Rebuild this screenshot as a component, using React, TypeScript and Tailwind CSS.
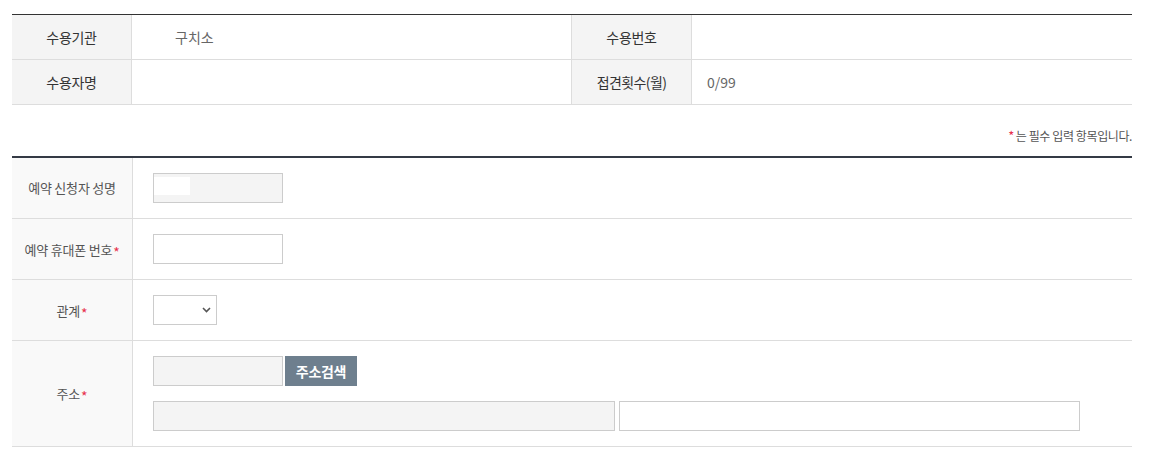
import React from "react";

const font = { fontFamily: '"Noto Sans CJK KR", "Noto Sans", sans-serif' };

function Star() {
  return <span className="text-[#e8314d] text-[14px] ml-[1px] relative top-[3px]">*</span>;
}

function Label({ children, req }: { children: React.ReactNode; req?: boolean }) {
  return (
    <div className="w-[121px] shrink-0 bg-[#f9f9f9] border-r border-[#dddddd] flex items-center justify-center text-[13px] text-[#555555] leading-[18px] tracking-[-0.2px]">
      <span>
        {children}
        {req && <Star />}
      </span>
    </div>
  );
}

export default function App() {
  return (
    <div className="w-[1152px] h-[457px] bg-white" style={font}>
      <div className="pt-[14px] px-[12px] w-[1144px]">
        {/* Table 1 */}
        <div className="border-t border-[#333333]">
          <div className="flex h-[45px] border-b border-[#dddddd]">
            <div className="w-[120px] shrink-0 bg-[#f4f4f4] border-r border-[#dddddd] flex items-center justify-center text-[14px] text-[#333333] tracking-[-0.3px]">수용기관</div>
            <div className="w-[440px] shrink-0 border-r border-[#dddddd] flex items-center pl-[43px] text-[14px] text-[#666666]">구치소</div>
            <div className="w-[120px] shrink-0 bg-[#f4f4f4] border-r border-[#dddddd] flex items-center justify-center text-[14px] text-[#333333] tracking-[-0.3px]">수용번호</div>
            <div className="flex-1" />
          </div>
          <div className="flex h-[45px] border-b border-[#dddddd]">
            <div className="w-[120px] shrink-0 bg-[#f4f4f4] border-r border-[#dddddd] flex items-center justify-center text-[14px] text-[#333333] tracking-[-0.3px]">수용자명</div>
            <div className="w-[440px] shrink-0 border-r border-[#dddddd]" />
            <div className="w-[120px] shrink-0 bg-[#f4f4f4] border-r border-[#dddddd] flex items-center justify-center text-[14px] text-[#333333] tracking-[-0.6px]">접견횟수(월)</div>
            <div className="flex-1 flex items-center pl-[15px] text-[14px] text-[#666666]">0/99</div>
          </div>
        </div>

        {/* Notice */}
        <div className="h-[51px] flex items-end justify-end pb-[12px] text-[12px] leading-[16px] text-[#555555] tracking-[-0.4px]">
          <span className="text-[#e8314d] mr-[2px] text-[13px]">*</span>
          <span>는 필수 입력 항목입니다.</span>
        </div>

        {/* Table 2 */}
        <div className="border-t-2 border-[#343a45]">
          <div className="flex border-b border-[#dddddd]">
            <Label>예약 신청자 성명</Label>
            <div className="flex-1 pl-[20px] py-[15px]">
              <div className="relative w-[130px] h-[30px] bg-[#f4f4f4] border border-[#cccccc]">
                <span className="absolute left-0 top-[3px] w-[36px] h-[18px] bg-white" />
              </div>
            </div>
          </div>
          <div className="flex border-b border-[#dddddd]">
            <Label req>예약 휴대폰 번호</Label>
            <div className="flex-1 pl-[20px] py-[15px]">
              <div className="w-[130px] h-[30px] bg-white border border-[#cccccc]" />
            </div>
          </div>
          <div className="flex border-b border-[#dddddd]">
            <Label req>관계</Label>
            <div className="flex-1 pl-[20px] py-[15px]">
              <div className="w-[64px] h-[30px] bg-white border border-[#cccccc] flex items-center justify-end pr-[5px]">
                <svg width="9" height="6" viewBox="0 0 9 6">
                  <path d="M1 1 L4.5 4.5 L8 1" fill="none" stroke="#555555" strokeWidth="1.6" />
                </svg>
              </div>
            </div>
          </div>
          <div className="flex border-b border-[#dddddd]">
            <Label req>주소</Label>
            <div className="flex-1 pl-[20px] py-[15px] flex flex-col gap-[15px]">
              <div className="flex gap-[2px]">
                <div className="w-[130px] h-[30px] bg-[#f4f4f4] border border-[#cccccc]" />
                <button className="w-[72px] h-[30px] bg-[#6e7f8e] text-white text-[14px] font-bold tracking-[-0.3px] flex items-center justify-center">주소검색</button>
              </div>
              <div className="flex gap-[4px]">
                <div className="w-[462px] h-[30px] bg-[#f4f4f4] border border-[#cccccc]" />
                <div className="w-[461px] h-[30px] bg-white border border-[#cccccc]" />
              </div>
            </div>
          </div>
        </div>
      </div>
    </div>
  );
}
